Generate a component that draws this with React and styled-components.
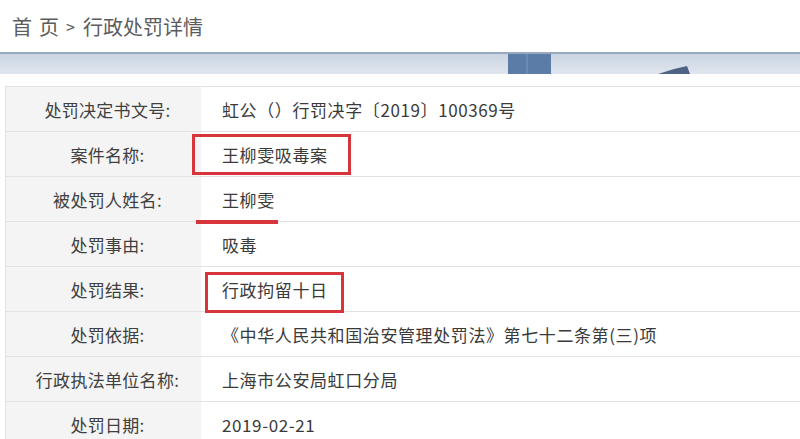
import React from 'react';
import styled, { createGlobalStyle } from 'styled-components';

const GlobalStyle = createGlobalStyle`
  html, body {
    margin: 0;
    padding: 0;
    background: #fff;
  }
  body {
    font-family: 'Microsoft YaHei', 'Noto Sans CJK SC', 'Noto Sans', sans-serif;
    color: #3a3a3a;
  }
`;

const Page = styled.div`
  width: 800px;
  height: 439px;
  overflow: hidden;
`;

const Crumbs = styled.div`
  height: 52px;
  display: flex;
  align-items: center;
  padding-left: 12px;
  font-size: 20px;
  color: #5c5c5c;

  & span.gap {
    margin-left: 7px;
  }

  & span.sep {
    margin: 0 8px 0 7px;
    font-size: 16px;
  }
`;

const Banner = styled.div`
  height: 20px;
  border-top: 2px solid #98a9bb;
  background: linear-gradient(180deg, #c9d4e2 0%, #d8dfe9 60%, #e0e6ee 100%);

  & svg {
    display: block;
  }
`;

const Table = styled.div`
  margin: 12px 0 0 5px;
  border-top: 1px solid #e2e2e2;
  border-left: 1px solid #e2e2e2;
`;

const Row = styled.div`
  display: grid;
  grid-template-columns: 195px 1fr;
  height: 44px;
  border-bottom: 1px solid #e2e2e2;
`;

const Label = styled.div`
  background: #f4f4f4;
  display: flex;
  align-items: center;
  justify-content: center;
  padding-left: 8px;
  font-size: 17px;
  color: #404040;
  letter-spacing: 0.3px;
`;

const Value = styled.div`
  position: relative;
  display: flex;
  align-items: center;
  padding-left: 21px;
  font-size: 17px;
  color: #3a3a3a;
  letter-spacing: 0.6px;
  white-space: nowrap;
`;

const RedBox = styled.div`
  position: absolute;
  left: ${(p) => p.$left}px;
  top: ${(p) => p.$top}px;
  width: ${(p) => p.$width}px;
  height: ${(p) => p.$height}px;
  border: 3px solid #d8343c;
  box-sizing: border-box;
  pointer-events: none;
`;

const RedLine = styled.div`
  position: absolute;
  left: ${(p) => p.$left}px;
  bottom: -3px;
  width: ${(p) => p.$width}px;
  height: 4px;
  background: #d8343c;
  pointer-events: none;
  z-index: 2;
`;

const rows = [
  { label: '处罚决定书文号: ', value: '虹公（）行罚决字〔2019〕100369号' },
  { label: '案件名称: ', value: '王柳雯吸毒案', box: { left: -9, top: 2, width: 159, height: 41 } },
  { label: '被处罚人姓名: ', value: '王柳雯', line: { left: -5, width: 82 } },
  { label: '处罚事由: ', value: '吸毒' },
  { label: '处罚结果: ', value: '行政拘留十日', box: { left: 4, top: 5, width: 139, height: 41 } },
  { label: '处罚依据: ', value: '《中华人民共和国治安管理处罚法》第七十二条第(三)项' },
  { label: '行政执法单位名称: ', value: '上海市公安局虹口分局' },
  { label: '处罚日期: ', value: '2019-02-21' },
];

const App = () => (
  <Page>
    <GlobalStyle />
    <Crumbs>
      首<span className="gap">页</span>
      <span className="sep">&gt;</span>行政处罚详情
    </Crumbs>
    <Banner>
      <svg width="800" height="20" viewBox="0 0 800 20">
        <rect x="508" y="0" width="43" height="20" fill="#5b7ca6" />
        <rect x="526" y="0" width="2" height="20" fill="#6c8bb2" />
        <path d="M658 20 L674 15 L687 12 L690 20 Z" fill="#4e6482" />
      </svg>
    </Banner>
    <Table>
      {rows.map((r) => (
        <Row key={r.label}>
          <Label>{r.label}</Label>
          <Value>
            {r.value}
            {r.box && (
              <RedBox
                $left={r.box.left}
                $top={r.box.top}
                $width={r.box.width}
                $height={r.box.height}
              />
            )}
            {r.line && <RedLine $left={r.line.left} $width={r.line.width} />}
          </Value>
        </Row>
      ))}
    </Table>
  </Page>
);

export default App;
